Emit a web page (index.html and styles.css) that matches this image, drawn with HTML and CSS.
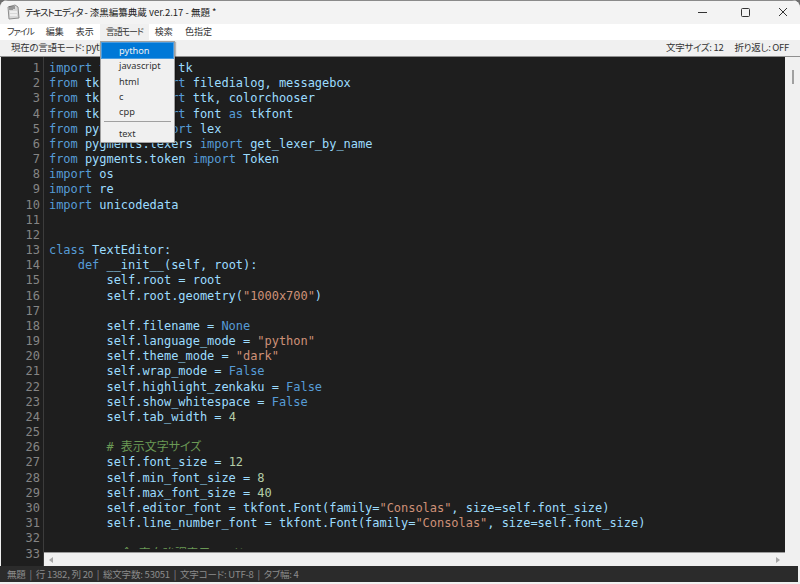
FILE: index.html
```html
<!DOCTYPE html>
<html lang="ja">
<head>
    <meta charset="UTF-8">
    <meta name="viewport" content="width=device-width, initial-scale=1.0">
    <title>テキストエディタ - 漆黒編纂典蔵 ver.2.17 - 無題 *</title>
    <link rel="stylesheet" href="styles.css">
</head>
<body>
    <div class="window">
        <div class="titlebar">
            <svg class="app-icon" width="14" height="16" viewBox="0 0 14 16">
                <path d="M2 3 L9 1 L12 3 L13 14 L3 15 Z" fill="#d8d8d8" stroke="#8c8c8c" stroke-width="1"/>
                <path d="M4 2 V6 M6 2 V6 M8 2 V5" stroke="#555" stroke-width="1"/>
                <path d="M4 8 H11 M4 11 H11" stroke="#f5f5f5" stroke-width="1.5"/>
            </svg>
            <span class="title-text"><span class="kana">テキストエディタ</span> - 漆黒編纂典蔵 ver.2.17 - 無題 *</span>
            <div class="window-controls">
                <svg class="win-btn" width="46" height="24" viewBox="0 0 46 24"><path d="M18 12.5 H27" stroke="#333" stroke-width="1"/></svg>
                <svg class="win-btn" width="38" height="24" viewBox="0 0 38 24"><rect x="15.5" y="8.5" width="8" height="8" rx="1" fill="none" stroke="#333" stroke-width="1"/></svg>
                <svg class="win-btn" width="36" height="24" viewBox="0 0 36 24"><path d="M15 8 L23 16 M23 8 L15 16" stroke="#333" stroke-width="1"/></svg>
            </div>
        </div>

        <div class="menubar">
            <span class="menu-item kana">ファイル</span>
            <span class="menu-item">編集</span>
            <span class="menu-item">表示</span>
            <span class="menu-item active kana">言語モード</span>
            <span class="menu-item">検索</span>
            <span class="menu-item">色指定</span>
        </div>

        <div class="modebar">
            <span class="mode-label">現在の言語モード: python</span>
            <span class="mode-size">文字サイズ: 12</span>
            <span class="mode-wrap">折り返し: OFF</span>
        </div>

        <div class="editor">
            <pre class="gutter">1
2
3
4
5
6
7
8
9
10
11
12
13
14
15
16
17
18
19
20
21
22
23
24
25
26
27
28
29
30
31
32
33</pre>
            <div class="editor-main">
                <pre class="code"><span class="kw">import</span> tkinter <span class="kw">as</span> tk
<span class="kw">from</span> tkinter <span class="kw">import</span> filedialog, messagebox
<span class="kw">from</span> tkinter <span class="kw">import</span> ttk, colorchooser
<span class="kw">from</span> tkinter <span class="kw">import</span> font <span class="kw">as</span> tkfont
<span class="kw">from</span> pygments <span class="kw">import</span> lex
<span class="kw">from</span> pygments.lexers <span class="kw">import</span> get_lexer_by_name
<span class="kw">from</span> pygments.token <span class="kw">import</span> Token
<span class="kw">import</span> os
<span class="kw">import</span> re
<span class="kw">import</span> unicodedata


<span class="kw">class</span> TextEditor:
    <span class="kw">def</span> __init__(self, root):
        self.root = root
        self.root.geometry(<span class="st">"1000x700"</span>)

        self.filename = <span class="kw">None</span>
        self.language_mode = <span class="st">"python"</span>
        self.theme_mode = <span class="st">"dark"</span>
        self.wrap_mode = <span class="kw">False</span>
        self.highlight_zenkaku = <span class="kw">False</span>
        self.show_whitespace = <span class="kw">False</span>
        self.tab_width = <span class="no">4</span>

        <span class="cm"># 表示文字サイズ</span>
        self.font_size = <span class="no">12</span>
        self.min_font_size = <span class="no">8</span>
        self.max_font_size = <span class="no">40</span>
        self.editor_font = tkfont.Font(family=<span class="st">"Consolas"</span>, size=self.font_size)
        self.line_number_font = tkfont.Font(family=<span class="st">"Consolas"</span>, size=self.font_size)

        <span class="cm"># 全・空白強調表示モード</span></pre>
                <div class="hscroll">
                    <span class="arrow-left"></span>
                    <span class="arrow-right"></span>
                </div>
            </div>
            <div class="vscroll"><div class="vthumb"></div></div>
        </div>

        <div class="statusbar">無題 &nbsp;|&nbsp; 行 1382, 列 20 &nbsp;|&nbsp; 総文字数: 53051 &nbsp;|&nbsp; 文字コード: UTF-8 &nbsp;|&nbsp; タブ幅: 4</div>

        <div class="popup">
            <div class="popup-item selected">python</div>
            <div class="popup-item">javascript</div>
            <div class="popup-item">html</div>
            <div class="popup-item">c</div>
            <div class="popup-item">cpp</div>
            <div class="popup-sep"></div>
            <div class="popup-item">text</div>
        </div>
    </div>
</body>
</html>
```

FILE: styles.css
```css
html, body {
    margin: 0;
    padding: 0;
    height: 100%;
    background-color: #6f6f6f;
    overflow: hidden;
}
.window {
    position: relative;
    width: 800px;
    height: 584px;
    box-sizing: border-box;
    padding-bottom: 2px;
    display: flex;
    flex-direction: column;
    background-color: #f0f0f0;
    border-radius: 8px 8px 0 0;
    overflow: hidden;
    font-family: "Noto Sans CJK JP", "Noto Sans", sans-serif;
    font-feature-settings: "palt";
    color: #333;
}
.kana {
    letter-spacing: -1.1px;
}
.titlebar {
    height: 24px;
    display: flex;
    align-items: center;
    padding-left: 6px;
    padding-bottom: 1px;
    background-color: #f3f3f3;
    border-top: 1px solid #8a8a8a;
    box-sizing: border-box;
    flex: none;
}
.app-icon {
    margin-right: 5px;
}
.title-text {
    font-size: 9.5px;
    color: #222;
    white-space: nowrap;
}
.window-controls {
    margin-left: auto;
    display: flex;
}
.menubar {
    height: 16px;
    flex: none;
    display: flex;
    align-items: center;
    padding-left: 1px;
    background-color: #fff;
    font-size: 9px;
}
.menu-item {
    padding: 0 6px;
    line-height: 16px;
    white-space: nowrap;
}
.menu-item.active {
    background-color: #f0f0f0;
}
.modebar {
    height: 16px;
    flex: none;
    display: flex;
    align-items: center;
    padding: 0 11px 2px;
    box-sizing: border-box;
    font-size: 9.5px;
    letter-spacing: -0.3px;
    white-space: nowrap;
}
.mode-size {
    margin-left: auto;
    margin-right: 11px;
}
.editor {
    flex: 1;
    min-height: 0;
    display: flex;
    border-top: 1px solid #8f8f8f;
    padding-left: 1px;
    background-color: #f0f0f0;
}
.gutter {
    width: 39px;
    margin: 0;
    padding: 4px 3px 0 0;
    flex: none;
    text-align: right;
    background-color: #1e1e1e;
    border-right: 1px solid #3c3c3c;
    color: #858585;
    font-family: "DejaVu Sans Mono", monospace;
    font-size: 12px;
    line-height: 15.17px;
    overflow: hidden;
}
.editor-main {
    flex: 1;
    min-width: 0;
    display: flex;
    flex-direction: column;
}
.code {
    flex: 1;
    min-height: 0;
    margin: 0;
    padding: 4px 0 0 5px;
    background-color: #1e1e1e;
    color: #9cdcfe;
    font-family: "DejaVu Sans Mono", "Noto Sans CJK JP", monospace;
    font-size: 12px;
    letter-spacing: -0.04px;
    line-height: 15.17px;
    overflow: hidden;
    border-bottom: 3px solid #1e1e1e;
}
.kw { color: #569cd6; }
.st { color: #ce9178; }
.no { color: #b5cea8; }
.cm { color: #6a9955; }
.hscroll {
    height: 14px;
    flex: none;
    box-sizing: border-box;
    display: flex;
    align-items: center;
    justify-content: space-between;
    padding: 0 5px;
    background-color: #f0f0f0;
    border-top: 1px solid #9a9a9a;
}
.arrow-left {
    border-right: 4px solid #a6a6a6;
    border-top: 3px solid transparent;
    border-bottom: 3px solid transparent;
}
.arrow-right {
    border-left: 4px solid #a6a6a6;
    border-top: 3px solid transparent;
    border-bottom: 3px solid transparent;
}
.vscroll {
    width: 15px;
    flex: none;
    padding-top: 13px;
    display: flex;
    justify-content: center;
}
.vthumb {
    width: 2px;
    height: 14px;
    background-color: #a0a0a0;
}
.statusbar {
    height: 16px;
    flex: none;
    margin-right: 2px;
    padding-left: 7px;
    background-color: #2b2b2b;
    color: #8c8c8c;
    font-size: 9.5px;
    letter-spacing: -0.2px;
    line-height: 17px;
    white-space: nowrap;
}
.popup {
    position: absolute;
    left: 100px;
    top: 41px;
    width: 75px;
    height: 102px;
    padding: 1px;
    box-sizing: border-box;
    background-color: #f0f0f0;
    border: 1px solid #a0a0a0;
    box-shadow: 1px 1px 1px rgba(0, 0, 0, 0.25);
    font-size: 9.25px;
    font-family: "Noto Sans", sans-serif;
}
.popup-item {
    height: 15.3px;
    line-height: 15px;
    padding-left: 17px;
    color: #333;
}
.popup-item.selected {
    background-color: #0078d7;
    color: #f0f0f0;
    outline: 1px solid #4a9ce0;
}
.popup-sep {
    height: 1px;
    margin: 2px 2px 4px;
    background-color: #a0a0a0;
}
```
